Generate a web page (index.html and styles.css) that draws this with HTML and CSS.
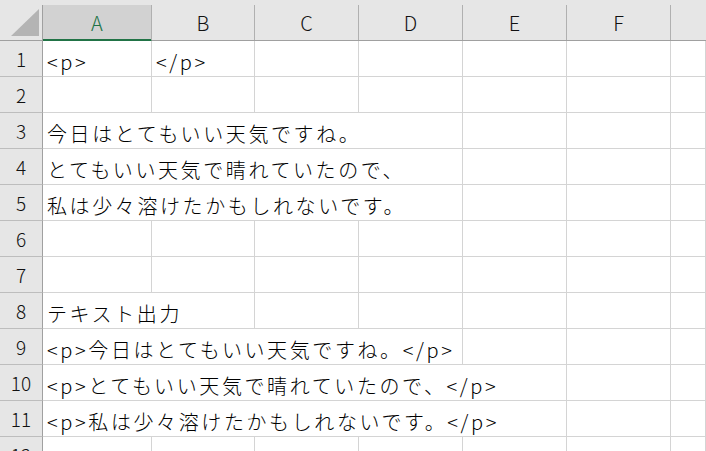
FILE: index.html
```html
<!DOCTYPE html>
<html lang="ja">
<head>
<meta charset="utf-8">
<link rel="stylesheet" href="styles.css">
</head>
<body>
<div class="sheet">
  <div class="row head">
    <div class="corner"><svg class="tri" width="42" height="34" viewBox="0 0 42 34"><polygon points="39,4 39,31 11,31" fill="#b4b4b4"/></svg></div>
    <div class="col sel">A</div>
    <div class="col">B</div>
    <div class="col">C</div>
    <div class="col">D</div>
    <div class="col">E</div>
    <div class="col">F</div>
    <div class="col last"></div>
  </div>

  <div class="row">
    <div class="num">1</div>
    <div class="cell">&lt;p&gt;</div>
    <div class="cell">&lt;/p&gt;</div>
    <div class="cell"></div><div class="cell"></div><div class="cell"></div><div class="cell"></div><div class="cell"></div>
  </div>
  <div class="row">
    <div class="num">2</div>
    <div class="cell"></div><div class="cell"></div><div class="cell"></div><div class="cell"></div><div class="cell"></div><div class="cell"></div><div class="cell"></div>
  </div>
  <div class="row">
    <div class="num">3</div>
    <div class="cell span4">今日はとてもいい天気ですね。</div>
    <div class="cell"></div><div class="cell"></div><div class="cell"></div>
  </div>
  <div class="row">
    <div class="num">4</div>
    <div class="cell span4">とてもいい天気で晴れていたので、</div>
    <div class="cell"></div><div class="cell"></div><div class="cell"></div>
  </div>
  <div class="row">
    <div class="num">5</div>
    <div class="cell span4">私は少々溶けたかもしれないです。</div>
    <div class="cell"></div><div class="cell"></div><div class="cell"></div>
  </div>
  <div class="row">
    <div class="num">6</div>
    <div class="cell"></div><div class="cell"></div><div class="cell"></div><div class="cell"></div><div class="cell"></div><div class="cell"></div><div class="cell"></div>
  </div>
  <div class="row">
    <div class="num">7</div>
    <div class="cell"></div><div class="cell"></div><div class="cell"></div><div class="cell"></div><div class="cell"></div><div class="cell"></div><div class="cell"></div>
  </div>
  <div class="row">
    <div class="num">8</div>
    <div class="cell span2">テキスト出力</div>
    <div class="cell"></div><div class="cell"></div><div class="cell"></div><div class="cell"></div><div class="cell"></div>
  </div>
  <div class="row">
    <div class="num">9</div>
    <div class="cell span4">&lt;p&gt;今日はとてもいい天気ですね。&lt;/p&gt;</div>
    <div class="cell"></div><div class="cell"></div><div class="cell"></div>
  </div>
  <div class="row">
    <div class="num">10</div>
    <div class="cell span5">&lt;p&gt;とてもいい天気で晴れていたので、&lt;/p&gt;</div>
    <div class="cell"></div><div class="cell"></div>
  </div>
  <div class="row">
    <div class="num">11</div>
    <div class="cell span5">&lt;p&gt;私は少々溶けたかもしれないです。&lt;/p&gt;</div>
    <div class="cell"></div><div class="cell"></div>
  </div>
  <div class="row">
    <div class="num">12</div>
    <div class="cell"></div><div class="cell"></div><div class="cell"></div><div class="cell"></div><div class="cell"></div><div class="cell"></div><div class="cell"></div>
  </div>
</div>
</body>
</html>
```

FILE: styles.css
```css
* { box-sizing: border-box; }
html, body {
  margin: 0;
  padding: 0;
  background: #ffffff;
  overflow: hidden;
}
body {
  width: 706px;
  height: 451px;
  font-family: "Noto Sans CJK JP", "Noto Sans", sans-serif;
  font-weight: 300;
  color: #000;
}
.sheet {
  width: 706px;
  display: flex;
  flex-direction: column;
}
.row {
  display: grid;
  grid-template-columns: 43px 109px 103px 104px 104px 104px 104px 35px;
  height: 36px;
}
.row.head {
  padding-top: 5px;
  background: #e6e6e6;
  border-bottom: 1px solid #a0a0a0;
  height: 41px;
}
.corner {
  border-right: 1px solid #a0a0a0;
}
.tri { display: block; }
.col {
  background: #e6e6e6;
  border-right: 1px solid #b0b0b0;
  display: flex;
  align-items: center;
  justify-content: center;
  font-size: 20px;
  line-height: 1;
  color: #111;
  padding-top: 1px;
}
.col.sel {
  background: #d2d2d2;
  color: #217346;
  box-shadow: inset 0 -1px 0 #217346;
  margin-bottom: -1px;
  border-bottom: 1px solid #217346;
}
.col.last { border-right: none; }
.num {
  background: #e6e6e6;
  border-right: 1px solid #a0a0a0;
  border-bottom: 1px solid #bdbdbd;
  display: flex;
  align-items: center;
  justify-content: center;
  font-size: 19px;
  line-height: 1;
  color: #111;
}
.cell {
  border-right: 1px solid #d4d4d4;
  border-bottom: 1px solid #d4d4d4;
  padding-left: 4px;
  font-size: 20px;
  letter-spacing: 2.6px;
  line-height: 29px;
  display: flex;
  align-items: flex-end;
  white-space: nowrap;
  overflow: hidden;
}
.span2 { grid-column: span 2; }
.span4 { grid-column: span 4; }
.span5 { grid-column: span 5; }
```
